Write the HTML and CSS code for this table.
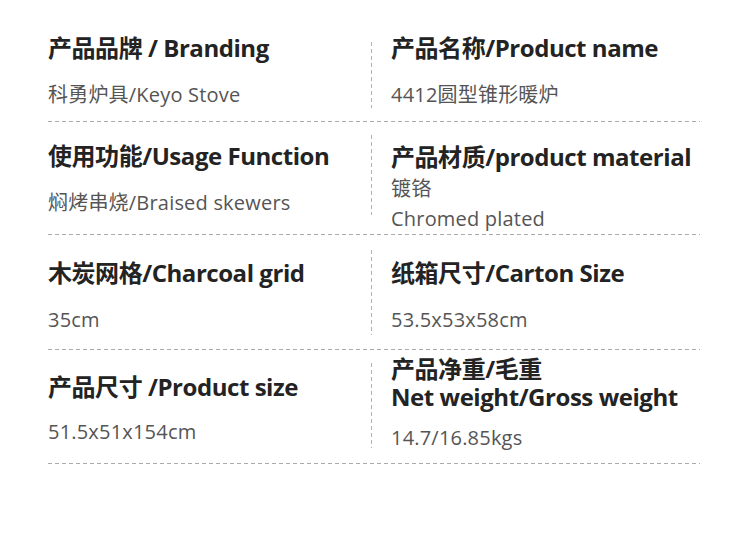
FILE: index.html
```html
<!DOCTYPE html>
<html lang="zh">
<head>
<meta charset="utf-8">
<title>产品参数</title>
<link rel="stylesheet" href="styles.css">
</head>
<body>
<div class="specs">
  <div class="row row-1">
    <div class="cell cell-a">
      <div class="title">产品品牌 / Branding</div>
      <div class="value">科勇炉具/Keyo Stove</div>
    </div>
    <div class="divider"></div>
    <div class="cell cell-a right">
      <div class="title">产品名称/Product name</div>
      <div class="value">4412圆型锥形暖炉</div>
    </div>
  </div>
  <div class="row row-2">
    <div class="cell cell-b">
      <div class="title">使用功能/Usage Function</div>
      <div class="value">焖烤串烧/Braised skewers</div>
    </div>
    <div class="divider"></div>
    <div class="cell cell-b2 right">
      <div class="title">产品材质/product material</div>
      <div class="value value-multi">
        <div class="line">镀铬</div>
        <div class="line">Chromed plated</div>
      </div>
    </div>
  </div>
  <div class="row row-3">
    <div class="cell cell-c">
      <div class="title">木炭网格/Charcoal grid</div>
      <div class="value">35cm</div>
    </div>
    <div class="divider"></div>
    <div class="cell cell-c right">
      <div class="title">纸箱尺寸/Carton Size</div>
      <div class="value">53.5x53x58cm</div>
    </div>
  </div>
  <div class="row row-4">
    <div class="cell cell-d">
      <div class="title">产品尺寸 /Product size</div>
      <div class="value value-tight">51.5x51x154cm</div>
    </div>
    <div class="divider"></div>
    <div class="cell cell-d2 right">
      <div class="title">产品净重/毛重</div>
      <div class="title">Net weight/Gross weight</div>
      <div class="value value-after2">14.7/16.85kgs</div>
    </div>
  </div>
</div>
</body>
</html>
```
FILE: styles.css
```css
html, body {
  margin: 0;
  padding: 0;
  background: #ffffff;
}

body {
  font-family: "Open Sans", "Noto Sans CJK SC", sans-serif;
  color: #222222;
}

.specs {
  margin-left: 48px;
  width: 652px;
}

.row {
  display: grid;
  grid-template-columns: 323px 1px 1fr;
  box-sizing: border-box;
  background-image: repeating-linear-gradient(to right, #ababab 0 4px, transparent 4px 7px);
  background-size: 100% 1px;
  background-position: left bottom;
  background-repeat: no-repeat;
}

.row-1 { height: 122px; }
.row-2 { height: 113px; }
.row-3 { height: 115px; }
.row-4 { height: 114px; }

.divider {
  width: 1px;
  background-image: repeating-linear-gradient(to bottom, #b0b0b0 0 4px, transparent 4px 7px);
}

.row-1 .divider { margin: 42px 0 14px; }
.row-2 .divider { margin: 13px 0 20px; }
.row-3 .divider { margin: 15px 0 15px; }
.row-4 .divider { margin: 13px 0 16px; }

.cell {
  box-sizing: border-box;
}

.right {
  padding-left: 19px;
}

.cell-a { padding-top: 34px; }
.cell-b { padding-top: 20px; }
.cell-b2 { padding-top: 21px; }
.cell-c { padding-top: 24px; }
.cell-d { padding-top: 23px; }
.cell-d2 { padding-top: 5px; }

.title {
  font-size: 24px;
  line-height: 28px;
  font-weight: 700;
  letter-spacing: -0.45px;
  color: #232323;
  white-space: nowrap;
}

.value {
  margin-top: 20px;
  font-size: 20px;
  line-height: 26px;
  letter-spacing: 0.2px;
  color: #555555;
  white-space: nowrap;
}

.value-multi {
  margin-top: 3px;
  line-height: 30px;
}

.value-tight {
  margin-top: 18px;
}

.value-after2 {
  margin-top: 14px;
}
```
